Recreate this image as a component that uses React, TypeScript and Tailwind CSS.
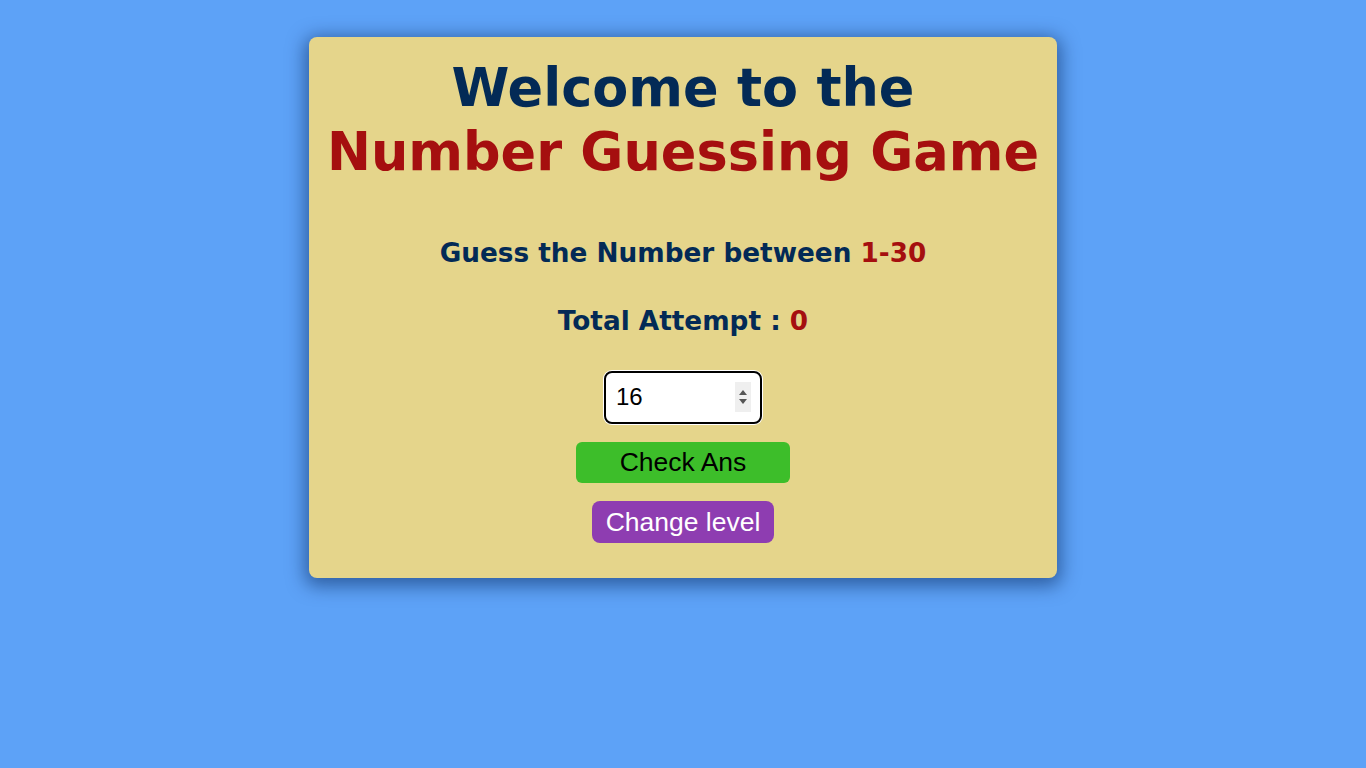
export default function App() {
  return (
    <div className="min-h-screen w-full bg-[#5da2f7] pt-[37px] font-['DejaVu_Sans',sans-serif]">
      <div className="mx-auto flex w-[748px] flex-col items-center rounded-lg bg-[#e5d58b] pt-[19px] pb-[35px] shadow-[0_4px_18px_4px_rgba(0,30,80,0.5)]">
        <h1 className="text-center text-[52.5px] font-bold leading-[64px] text-[#032a56]">
          Welcome to the
          <br />
          <span className="text-[#a50f0f]">Number Guessing Game</span>
        </h1>

        <p className="mt-[50px] text-[26.3px] font-bold text-[#032a56]">
          Guess the Number between <span className="text-[#a50f0f]">1-30</span>
        </p>
        <p className="mt-[29px] text-[26.3px] font-bold text-[#032a56]">
          Total Attempt : <span className="text-[#a50f0f]">0</span>
        </p>

        <div className="relative mt-[29px]">
          <input
            type="text"
            defaultValue="16"
            className="h-[53px] w-[158px] rounded-lg border-2 border-black bg-white pl-[10px] pr-[8px] font-['Liberation_Sans',sans-serif] text-[24px] text-black outline-none ring-1 ring-white"
          />
          <div className="absolute right-[11px] top-[11px] flex h-[30px] w-[16px] flex-col items-center justify-center gap-[4px] bg-[#efefef]">
            <svg width="8" height="5" viewBox="0 0 8 5">
              <path d="M4 0L8 5H0z" fill="#555" />
            </svg>
            <svg width="8" height="5" viewBox="0 0 8 5">
              <path d="M0 0h8L4 5z" fill="#555" />
            </svg>
          </div>
        </div>

        <button className="mt-[18px] h-[41px] w-[214px] rounded-md bg-[#3dbe2a] font-['Liberation_Sans',sans-serif] text-[26.5px] leading-none text-black">
          Check Ans
        </button>
        <button className="mt-[18px] h-[42px] w-[182px] rounded-lg bg-[#8e3db1] font-['Liberation_Sans',sans-serif] text-[26.5px] leading-none text-white">
          Change level
        </button>
      </div>
    </div>
  )
}
